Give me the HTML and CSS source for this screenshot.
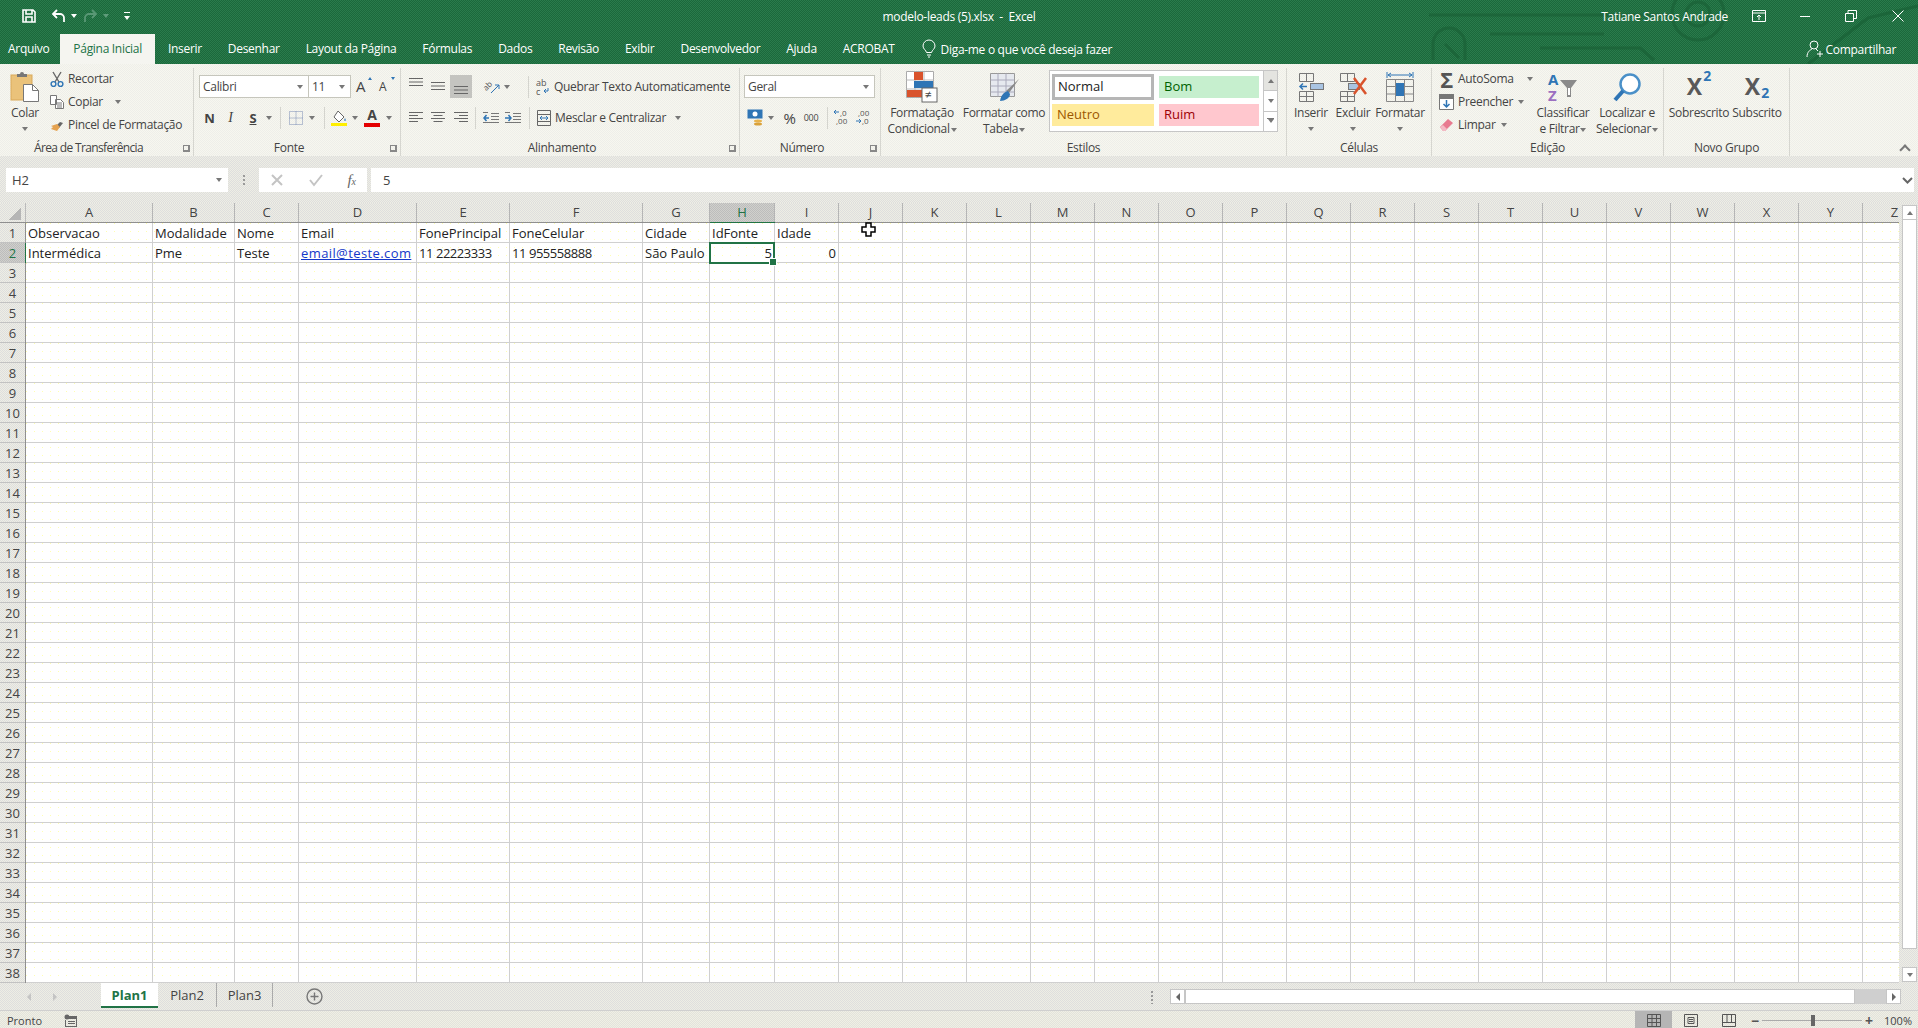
FILE: index.html
```html
<!DOCTYPE html>
<html lang="pt-BR">
<head>
    <meta charset="UTF-8">
    <title>modelo-leads (5).xlsx - Excel</title>
    <link rel="stylesheet" href="styles.css">
</head>
<body>
    <header class="app-head">
        <!-- circuit art behind the title bar -->
        <svg class="head-art" width="1918" height="64" viewBox="0 0 1918 64" fill="none" stroke="#1a6237" stroke-width="3">
            <path d="M1429 15H1672M1490 34H1604M1540 48H1640l14 12M1808 64l60-46 50-12"/>
            <path d="M1433 60V44a16 16 0 0 1 32 0v16M1445 44l14 14"/>
            <circle cx="1698" cy="14" r="26"/>
            <circle cx="1698" cy="14" r="12"/>
        </svg>
        <div class="title-row">
            <div class="qat">
                <svg class="qat-save" width="14" height="14" viewBox="0 0 14 14" fill="none" stroke="#fff" stroke-width="1.6"><path d="M1 1h10l2 2v10H1zM4 1v4h6V1M4 13V8h6v5"/></svg>
                <svg class="qat-undo" width="15" height="14" viewBox="0 0 15 14" fill="none" stroke="#fff" stroke-width="1.8"><path d="M6 1 2 5l4 4M2 5h7a4 4 0 0 1 4 4v4"/></svg>
                <i class="caret caret-white qat-caret"></i>
                <svg class="qat-redo" width="15" height="14" viewBox="0 0 15 14" fill="none" stroke="#5f9c7b" stroke-width="1.8"><path d="M9 1l4 4-4 4M13 5H6a4 4 0 0 0-4 4v4"/></svg>
                <i class="caret caret-dim qat-caret"></i>
                <span class="qat-more"><i class="caret caret-white"></i></span>
            </div>
            <div class="doc-title">modelo-leads (5).xlsx &nbsp;-&nbsp; Excel</div>
            <div class="win-area">
                <span class="user-name">Tatiane Santos Andrade</span>
                <svg class="win-ribbon" width="14" height="12" viewBox="0 0 14 12" fill="none" stroke="#fff"><path d="M.5.5h13v11H.5zM.5 3h13M7 10V5M5 7l2-2 2 2"/></svg>
                <svg class="win-min" width="10" height="10" viewBox="0 0 10 10" stroke="#fff"><path d="M0 5.5h10"/></svg>
                <svg class="win-max" width="12" height="12" viewBox="0 0 12 12" fill="none" stroke="#fff"><path d="M.5 3.5h8v8h-8zM3 3.5V.5h8.5v8H8.5"/></svg>
                <svg class="win-close" width="12" height="12" viewBox="0 0 12 12" stroke="#fff"><path d="M.5.5l11 11M11.5.5l-11 11"/></svg>
            </div>
        </div>
        <nav class="tab-row">
            <a class="tab tab-file">Arquivo</a>
            <a class="tab active">Página Inicial</a>
            <a class="tab">Inserir</a>
            <a class="tab">Desenhar</a>
            <a class="tab">Layout da Página</a>
            <a class="tab">Fórmulas</a>
            <a class="tab">Dados</a>
            <a class="tab">Revisão</a>
            <a class="tab">Exibir</a>
            <a class="tab">Desenvolvedor</a>
            <a class="tab">Ajuda</a>
            <a class="tab">ACROBAT</a>
            <a class="tell-me">
                <svg width="14" height="18" viewBox="0 0 14 18" fill="none" stroke="#fff"><path d="M4.5 12.5C4 10 1 9 1 6a6 6 0 0 1 12 0c0 3-3 4-3.5 6.5zM5 15h4M6 17h2"/></svg>
                Diga-me o que você deseja fazer
            </a>
            <a class="share">
                <svg width="17" height="18" viewBox="0 0 17 18" fill="none" stroke="#fff"><circle cx="8" cy="5" r="4"/><path d="M1 17c0-5 3-7 5-8M10 9l2 2M11 14h6M14 11v6"/></svg>
                Compartilhar
            </a>
        </nav>
    </header>

    <section class="ribbon">
        <!-- Clipboard -->
        <div class="group g-clip">
            <div class="group-body">
                <div class="big-btn w34">
                    <svg class="big-icon" width="30" height="32" viewBox="0 0 30 32">
                        <rect x="1" y="4" width="21" height="25" fill="#eac27a" stroke="#d9a95a"/>
                        <path d="M7 5V3h3a2 2 0 0 1 4 0h3v3H7z" fill="#777"/>
                        <path d="M13.5 13.5h9l6 6v11h-15z" fill="#fff" stroke="#777"/>
                        <path d="M22.5 13.5v6h6" fill="none" stroke="#777"/>
                    </svg>
                    <span>Colar</span>
                    <i class="caret big-caret"></i>
                </div>
                <div class="small-stack">
                    <div class="small-item">
                        <svg width="14" height="16" viewBox="0 0 14 16" fill="none"><path d="M3 1l6 10M11 1L5 11" stroke="#666" stroke-width="1.4"/><circle cx="3.5" cy="13" r="2.4" stroke="#2f75b5" stroke-width="1.4"/><circle cx="10.5" cy="13" r="2.4" stroke="#2f75b5" stroke-width="1.4"/></svg>
                        <span>Recortar</span>
                    </div>
                    <div class="small-item">
                        <svg width="14" height="14" viewBox="0 0 14 14" fill="#fff" stroke="#777"><path d="M.5.5h6v9h-6zM5.5 4.5h5l3 3v6h-8z"/><path d="M7 8h5M7 10h5M7 12h5" fill="none"/></svg>
                        <span>Copiar</span>
                        <i class="caret copy-caret"></i>
                    </div>
                    <div class="small-item">
                        <svg width="14" height="14" viewBox="0 0 14 14"><path d="M7 7l3-3 3 1-4 5z" fill="#666"/><path d="M7 6l3 3-3 4-6-2 1-1 1-1-2-1z" fill="#e5a24f"/></svg>
                        <span>Pincel de Formatação</span>
                    </div>
                </div>
            </div>
            <div class="group-label has-launcher clip-label">Área de Transferência<i class="launcher"></i></div>
        </div>

        <!-- Font -->
        <div class="group g-font">
            <div class="group-body stack-rows">
                <div class="tool-row">
                    <div class="combo w110">Calibri<i class="caret"></i></div>
                    <div class="combo w43">11<i class="caret"></i></div>
                    <span class="cell w6"></span>
                    <span class="font-step w12">A<i class="step-up"></i></span>
                    <span class="cell w11"></span>
                    <span class="font-step font-step-small w12">A<i class="step-down"></i></span>
                </div>
                <div class="tool-row row-two">
                    <span class="cell w21 fmt-b">N</span>
                    <span class="cell w21 fmt-i">I</span>
                    <span class="cell w24 fmt-u">S</span>
                    <span class="cell w8"><i class="caret"></i></span>
                    <span class="sep ml7"></span>
                    <span class="cell w16 ml7">
                        <svg width="14" height="14" viewBox="0 0 14 14" fill="none" stroke="#7a8db5" stroke-dasharray="1 1"><path d="M.5.5h13v13H.5zM7 .5v13M.5 7h13"/></svg>
                    </span>
                    <span class="cell w16"><i class="caret"></i></span>
                    <span class="sep ml4"></span>
                    <span class="cell w20 ml4">
                        <svg width="16" height="16" viewBox="0 0 16 16"><path d="M7 1l6 6-5 5-5-5z" fill="#fff" stroke="#666"/><path d="M14 8c1 2 1 3 0 3s-1-1 0-3z" fill="#2f75b5"/><rect y="13" width="16" height="3" fill="#ffef00"/></svg>
                    </span>
                    <span class="cell w12"><i class="caret"></i></span>
                    <span class="cell w22 color-a">A</span>
                    <span class="cell w12"><i class="caret"></i></span>
                </div>
            </div>
            <div class="group-label has-launcher">Fonte<i class="launcher"></i></div>
        </div>

        <!-- Alignment -->
        <div class="group g-align">
            <div class="group-body stack-rows">
                <div class="tool-row">
                    <span class="cell w21">
                        <svg class="lines-top" width="14" height="9" viewBox="0 0 14 9" stroke="#666"><path d="M0 .5h14M0 4h14M0 7.5h14"/></svg>
                    </span>
                    <span class="cell w24">
                        <svg width="14" height="9" viewBox="0 0 14 9" stroke="#666"><path d="M0 .5h14M0 4h14M0 7.5h14"/></svg>
                    </span>
                    <span class="cell w22 pressed">
                        <svg class="lines-low" width="14" height="9" viewBox="0 0 14 9" stroke="#666"><path d="M0 .5h14M0 4h14M0 7.5h14"/></svg>
                    </span>
                    <span class="cell w24 ml8">
                        <svg width="16" height="16" viewBox="0 0 16 16"><text class="svg-text" x="0" y="9" font-size="8" fill="#555" transform="rotate(-45 5 8)">ab</text><path d="M7 14l8-8M11 6h4v4" fill="none" stroke="#2f75b5"/></svg>
                    </span>
                    <span class="cell w6"><i class="caret"></i></span>
                    <span class="sep ml18"></span>
                    <span class="cell w14 ml7">
                        <svg width="14" height="20" viewBox="0 0 14 20"><text class="svg-text" x="0" y="9" font-size="9" fill="#555">ab</text><text class="svg-text" x="0" y="18" font-size="9" fill="#555">c</text><path d="M12 11v3H8M10 12l-2 2 2 2" fill="none" stroke="#2f75b5"/></svg>
                    </span>
                    <span class="row-text">Quebrar Texto Automaticamente</span>
                </div>
                <div class="tool-row row-two">
                    <span class="cell w21">
                        <svg width="14" height="11" viewBox="0 0 14 11" stroke="#666"><path d="M0 .5h14M0 3.5h9M0 6.5h14M0 9.5h9"/></svg>
                    </span>
                    <span class="cell w24">
                        <svg width="14" height="11" viewBox="0 0 14 11" stroke="#666"><path d="M0 .5h14M2.5 3.5h9M0 6.5h14M2.5 9.5h9"/></svg>
                    </span>
                    <span class="cell w21">
                        <svg width="14" height="11" viewBox="0 0 14 11" stroke="#666"><path d="M0 .5h14M5 3.5h9M0 6.5h14M5 9.5h9"/></svg>
                    </span>
                    <span class="sep ml4"></span>
                    <span class="cell w16 ml7">
                        <svg width="16" height="12" viewBox="0 0 16 12" fill="none" stroke="#777"><path d="M8 1.5h8M8 4.5h8M8 7.5h8M0 10.5h16M0 .5h5"/><path d="M6 6H1M3.5 3 1 6l2.5 3" stroke="#2f75b5" stroke-width="1.5"/></svg>
                    </span>
                    <span class="cell w16 ml6">
                        <svg width="16" height="12" viewBox="0 0 16 12" fill="none" stroke="#777"><path d="M8 1.5h8M8 4.5h8M8 7.5h8M0 10.5h16M0 .5h5"/><path d="M0 6h6M3.5 3 6 6 3.5 9" stroke="#2f75b5" stroke-width="1.5"/></svg>
                    </span>
                    <span class="sep ml8"></span>
                    <span class="cell w14 ml7">
                        <svg width="14" height="16" viewBox="0 0 14 16" fill="none" stroke="#666"><path d="M.5.5h13v15H.5zM.5 4.5h13M.5 11.5h13"/><path d="M3 8h8M3 8l2-2M3 8l2 2M11 8 9 6M11 8l-2 2" stroke="#2f75b5"/></svg>
                    </span>
                    <span class="row-text">Mesclar e Centralizar</span>
                    <i class="caret ml9"></i>
                </div>
            </div>
            <div class="group-label has-launcher">Alinhamento<i class="launcher"></i></div>
        </div>

        <!-- Number -->
        <div class="group g-number">
            <div class="group-body stack-rows">
                <div class="tool-row">
                    <div class="combo w131">Geral<i class="caret"></i></div>
                </div>
                <div class="tool-row row-two">
                    <span class="cell w23">
                        <svg width="17" height="17" viewBox="0 0 17 17"><rect x=".5" y=".5" width="15" height="9" fill="#2f75b5"/><circle cx="8" cy="5" r="2.5" fill="#fff"/><ellipse cx="11" cy="12" rx="4" ry="1.5" fill="#e8b34c"/><ellipse cx="11" cy="15" rx="4" ry="1.5" fill="#d9a13a"/></svg>
                    </span>
                    <span class="cell w8"><i class="caret"></i></span>
                    <span class="cell w13 ml8 num-pct">%</span>
                    <span class="cell w14 ml8 num-thou">000</span>
                    <span class="sep ml9"></span>
                    <span class="cell w14 ml6"><svg width="15" height="17" viewBox="0 0 15 17"><text class="svg-text" x="6" y="7" font-size="8" fill="#555">,0</text><text class="svg-text" x="2" y="15" font-size="8" fill="#555">,00</text><path d="M5 3H0M2 1 0 3l2 2" fill="none" stroke="#2f75b5"/></svg></span>
                    <span class="cell w14 ml8"><svg width="15" height="17" viewBox="0 0 15 17"><text class="svg-text" x="2" y="7" font-size="8" fill="#555">,00</text><text class="svg-text" x="6" y="15" font-size="8" fill="#555">,0</text><path d="M0 12h5M3 10l2 2-2 2" fill="none" stroke="#2f75b5"/></svg></span>
                </div>
            </div>
            <div class="group-label has-launcher">Número<i class="launcher"></i></div>
        </div>

        <!-- Styles -->
        <div class="group g-styles">
            <div class="group-body">
                <div class="big-btn w72">
                    <svg class="big-icon" width="32" height="32" viewBox="0 0 32 32">
                        <path d="M.5.5h27v26H.5z" fill="#fff" stroke="#aaa"/>
                        <path d="M.5 9h27M.5 18h27M9 .5v26M18 .5v26" stroke="#bbb" fill="none"/>
                        <rect x="8" y="1" width="9" height="8" fill="#d9532c"/>
                        <rect x="8" y="10" width="19" height="7" fill="#2f75b5"/>
                        <rect x="1" y="19" width="15" height="7" fill="#d9532c"/>
                        <rect x="16" y="17" width="15" height="14" fill="#fff" stroke="#666"/>
                        <text class="svg-text" x="19" y="28" font-size="12" fill="#444">≠</text>
                    </svg>
                    <span>Formatação</span>
                    <span>Condicional <i class="caret inline-caret"></i></span>
                </div>
                <div class="big-btn w82 ml5">
                    <svg class="big-icon" width="32" height="32" viewBox="0 0 32 32">
                        <path d="M2.5 2.5h24v23h-24z" fill="#e6e9ef" stroke="#999"/>
                        <path d="M2.5 9h24M2.5 15h24M2.5 21h24M10 2.5v23M18 2.5v23" stroke="#aab" fill="none"/>
                        <path d="M31 8 21 22l-3-2z" fill="#888"/>
                        <path d="M20 20c-4 1-7 4-8 10 5 0 10-3 10-7z" fill="#2f75b5"/>
                    </svg>
                    <span>Formatar como</span>
                    <span>Tabela <i class="caret inline-caret"></i></span>
                </div>
                <div class="gallery ml4">
                    <div class="style-chips">
                        <div class="chip chip-normal">Normal</div>
                        <div class="chip chip-good">Bom</div>
                        <div class="chip chip-neutral">Neutro</div>
                        <div class="chip chip-bad">Ruim</div>
                    </div>
                    <div class="gallery-arrows">
                        <span class="gallery-btn gallery-off"><i class="caret caret-up"></i></span>
                        <span class="gallery-btn"><i class="caret"></i></span>
                        <span class="gallery-btn gallery-more"><i class="caret"></i></span>
                    </div>
                </div>
            </div>
            <div class="group-label">Estilos</div>
        </div>

        <!-- Cells -->
        <div class="group g-cells">
            <div class="group-body">
                <div class="big-btn w36">
                    <svg class="big-icon" width="28" height="32" viewBox="0 0 28 32" fill="none" stroke="#777">
                        <path d="M2.5 2.5h14v8h-14zM9.5 2.5v8M2.5 20.5h14v10h-14zM9.5 20.5v10M2.5 25.5h14"/>
                        <rect x="13.5" y="12.5" width="13" height="6" fill="#a9c4e2"/>
                        <path d="M10 15.5H3M6 12.5l-3 3 3 3" stroke="#2f75b5" stroke-width="1.5"/>
                    </svg>
                    <span>Inserir</span>
                    <i class="caret big-caret"></i>
                </div>
                <div class="big-btn w36 ml6">
                    <svg class="big-icon" width="30" height="32" viewBox="0 0 30 32" fill="none" stroke="#777">
                        <path d="M2.5 2.5h14v8h-14zM9.5 2.5v8M2.5 20.5h14v10h-14zM9.5 20.5v10M2.5 25.5h14"/>
                        <rect x="10.5" y="12.5" width="11" height="6" fill="#a9c4e2"/>
                        <path d="M16 7l12 16M28 7 16 23" stroke="#d9532c" stroke-width="2.5"/>
                    </svg>
                    <span>Excluir</span>
                    <i class="caret big-caret"></i>
                </div>
                <div class="big-btn w52 ml3">
                    <svg class="big-icon" width="30" height="32" viewBox="0 0 30 32" fill="none" stroke="#888">
                        <path d="M2 1v6M28 1v6M3 4h24M3 4l3-2M3 4l3 2M27 4l-3-2M27 4l-3 2" stroke="#2f75b5"/>
                        <path d="M1.5 8.5h27v22h-27zM10.5 8.5v22M19.5 8.5v22M1.5 15.5h27M1.5 23h27"/>
                        <rect x="11" y="12" width="8" height="13" fill="#2f75b5" stroke="none"/>
                    </svg>
                    <span>Formatar</span>
                    <i class="caret big-caret"></i>
                </div>
            </div>
            <div class="group-label">Células</div>
        </div>

        <!-- Editing -->
        <div class="group g-edit">
            <div class="group-body">
                <div class="small-stack edit-stack">
                    <div class="small-item">
                        <span class="sigma">Σ</span>
                        <span>AutoSoma</span>
                        <i class="caret sum-caret"></i>
                    </div>
                    <div class="small-item">
                        <svg width="15" height="16" viewBox="0 0 15 16" fill="#fff" stroke="#777"><path d="M.5.5h14v15H.5z"/><path d="M.5.5h14v4H.5z" fill="#777"/><path d="M7.5 6v7M4.5 10l3 3 3-3" fill="none" stroke="#2f75b5" stroke-width="1.5"/></svg>
                        <span>Preencher</span>
                        <i class="caret fill-caret"></i>
                    </div>
                    <div class="small-item">
                        <svg width="15" height="14" viewBox="0 0 15 14"><path d="M1 9l8-8 5 4-8 8H4z" fill="#e87a90"/><path d="M1 9l3 4h2l2-2-4-4z" fill="#f4b9c4"/></svg>
                        <span>Limpar</span>
                        <i class="caret fill-caret"></i>
                    </div>
                </div>
                <div class="big-btn w54">
                    <svg class="big-icon" width="30" height="32" viewBox="0 0 30 32">
                        <text class="svg-bold" x="0" y="14" font-size="15" fill="#2f75b5">A</text>
                        <text class="svg-bold" x="0" y="30" font-size="15" fill="#9b6fc0">Z</text>
                        <path d="M12 9h17l-6 8v9h-4v-9z" fill="#8a8a8a"/>
                        <path d="M20 17v7h2v-7" fill="#fff"/>
                    </svg>
                    <span>Classificar</span>
                    <span>e Filtrar <i class="caret inline-caret"></i></span>
                </div>
                <div class="big-btn w62 ml6">
                    <svg class="big-icon" width="30" height="32" viewBox="0 0 30 32" fill="none">
                        <circle cx="18" cy="13" r="9.5" stroke="#4a90c8" stroke-width="2.5" fill="#fff"/>
                        <path d="M11 20 3 29" stroke="#2f75b5" stroke-width="4"/>
                    </svg>
                    <span>Localizar e</span>
                    <span>Selecionar <i class="caret inline-caret"></i></span>
                </div>
            </div>
            <div class="group-label">Edição</div>
        </div>

        <!-- Custom group -->
        <div class="group g-new">
            <div class="group-body">
                <div class="big-btn w60">
                    <div class="script-icon">X<sup>2</sup></div>
                    <span>Sobrescrito</span>
                </div>
                <div class="big-btn w48 ml4">
                    <div class="script-icon">X<sub>2</sub></div>
                    <span>Subscrito</span>
                </div>
            </div>
            <div class="group-label">Novo Grupo</div>
        </div>
        <i class="ribbon-collapse"></i>
    </section>

    <section class="formula-bar">
        <div class="name-box">H2<i class="caret"></i></div>
        <div class="grip"></div>
        <div class="fx-box">
            <svg width="14" height="14" viewBox="0 0 14 14" stroke="#c4c4c4" stroke-width="2"><path d="M2 2l10 10M12 2 2 12"/></svg>
            <svg width="14" height="14" viewBox="0 0 14 14" fill="none" stroke="#c4c4c4" stroke-width="2"><path d="M1 7l4 5 8-10"/></svg>
            <span class="fx-label">f<small>x</small></span>
        </div>
        <div class="formula-input">5
            <svg width="11" height="7" viewBox="0 0 11 7" fill="none" stroke="#666" stroke-width="2"><path d="M1 1l4.5 4.5L10 1"/></svg>
        </div>
    </section>

    <main class="sheet-wrap">
        <div class="sheet">
            <div class="col-heads">
                <div class="corner"></div>
                <div class="col-grid">
                    <div class="col-head">A</div><div class="col-head">B</div><div class="col-head">C</div><div class="col-head">D</div>
                    <div class="col-head">E</div><div class="col-head">F</div><div class="col-head">G</div><div class="col-head cur">H</div>
                    <div class="col-head">I</div><div class="col-head">J</div><div class="col-head">K</div><div class="col-head">L</div>
                    <div class="col-head">M</div><div class="col-head">N</div><div class="col-head">O</div><div class="col-head">P</div>
                    <div class="col-head">Q</div><div class="col-head">R</div><div class="col-head">S</div><div class="col-head">T</div>
                    <div class="col-head">U</div><div class="col-head">V</div><div class="col-head">W</div><div class="col-head">X</div>
                    <div class="col-head">Y</div><div class="col-head">Z</div>
                </div>
            </div>
            <div class="sheet-body">
                <div class="row-heads">
                    <div>1</div><div class="cur">2</div><div>3</div><div>4</div><div>5</div><div>6</div><div>7</div><div>8</div>
                    <div>9</div><div>10</div><div>11</div><div>12</div><div>13</div><div>14</div><div>15</div><div>16</div>
                    <div>17</div><div>18</div><div>19</div><div>20</div><div>21</div><div>22</div><div>23</div><div>24</div>
                    <div>25</div><div>26</div><div>27</div><div>28</div><div>29</div><div>30</div><div>31</div><div>32</div>
                    <div>33</div><div>34</div><div>35</div><div>36</div><div>37</div><div>38</div>
                </div>
                <div class="col-grid cells">
                    <div class="col"><div class="c">Observacao</div><div class="c">Intermédica</div></div>
                    <div class="col"><div class="c">Modalidade</div><div class="c">Pme</div></div>
                    <div class="col"><div class="c">Nome</div><div class="c">Teste</div></div>
                    <div class="col"><div class="c">Email</div><div class="c link">email@teste.com</div></div>
                    <div class="col"><div class="c">FonePrincipal</div><div class="c phone">11 22223333</div></div>
                    <div class="col"><div class="c">FoneCelular</div><div class="c phone">11 955558888</div></div>
                    <div class="col"><div class="c">Cidade</div><div class="c">São Paulo</div></div>
                    <div class="col"><div class="c">IdFonte</div><div class="c num selected">5</div></div>
                    <div class="col"><div class="c">Idade</div><div class="c num">0</div></div>
                    <div class="col"></div><div class="col"></div><div class="col"></div><div class="col"></div>
                    <div class="col"></div><div class="col"></div><div class="col"></div><div class="col"></div>
                    <div class="col"></div><div class="col"></div><div class="col"></div><div class="col"></div>
                    <div class="col"></div><div class="col"></div><div class="col"></div><div class="col"></div>
                    <div class="col"></div>
                </div>
            </div>
            <svg class="cell-cursor" width="15" height="15" viewBox="0 0 15 15"><path d="M5 1h5v4h4v5h-4v4H5v-4H1V5h4z" fill="#fff" stroke="#000" stroke-width="1.5"/></svg>
        </div>
        <div class="vscroll">
            <span class="sb-btn"><i class="caret caret-up"></i></span>
            <div class="sb-thumb"></div>
            <span class="sb-btn"><i class="caret"></i></span>
        </div>
    </main>

    <section class="tab-bar">
        <div class="sheet-nav"><i class="nav-left"></i><i class="nav-right"></i></div>
        <div class="sheet-tab on">Plan1</div>
        <div class="sheet-tab tab-two">Plan2</div>
        <div class="sheet-tab tab-three">Plan3</div>
        <div class="add-sheet">
            <svg width="17" height="17" viewBox="0 0 17 17" fill="none" stroke="#777" stroke-width="1.4"><circle cx="8.5" cy="8.5" r="7.5"/><path d="M8.5 4.5v8M4.5 8.5h8"/></svg>
        </div>
        <div class="hscroll">
            <span class="hs-dots"></span>
            <span class="sb-btn hs-btn"><i class="nav-left"></i></span>
            <div class="hs-thumb"></div>
            <div class="hs-gap"></div>
            <span class="sb-btn hs-btn"><i class="nav-right"></i></span>
        </div>
    </section>

    <footer class="status">
        <span class="ready">Pronto</span>
        <svg class="macro" width="13" height="13" viewBox="0 0 13 13" fill="#666"><circle cx="3" cy="3" r="2.5"/><path d="M5 2h8v11H1V6h1v6h10V5H5z"/><path d="M4 7h7v1H4zM4 9h7v1H4z"/></svg>
        <div class="status-right">
            <span class="view-btn view-on">
                <svg width="14" height="13" viewBox="0 0 14 13" fill="none" stroke="#555"><path d="M.5.5h13v12H.5zM.5 4.5h13M.5 8.5h13M5 .5v12M9.5.5v12"/></svg>
            </span>
            <span class="view-btn">
                <svg width="14" height="13" viewBox="0 0 14 13" fill="none" stroke="#555"><path d="M.5.5h13v12H.5zM4 3.5h6v6H4zM5 5.5h4M5 7.5h4"/></svg>
            </span>
            <span class="view-btn">
                <svg width="14" height="13" viewBox="0 0 14 13" fill="none" stroke="#555"><path d="M.5.5h13v12H.5zM.5 8.5h13M5 .5v8M9.5.5v8"/></svg>
            </span>
            <div class="zoom-bar">
                <b>−</b>
                <div class="zoom-track"><i></i></div>
                <b>+</b>
            </div>
            <span class="zoom-pct">100%</span>
        </div>
    </footer>
</body>
</html>
```
FILE: styles.css
```css
* {
    box-sizing: border-box;
}
html, body {
    height: 100%;
}
body {
    margin: 0;
    overflow: hidden;
    font-family: "Open Sans", "Noto Sans", sans-serif;
    font-size: 12px;
    letter-spacing: -0.3px;
    color: #444;
    background: #f1f1ea;
    display: flex;
    flex-direction: column;
}
svg {
    display: block;
    flex: none;
    overflow: visible;
}
i {
    font-style: normal;
}

/* small dropdown triangle used everywhere */
.caret {
    display: inline-block;
    width: 0;
    height: 0;
    border-left: 3.5px solid transparent;
    border-right: 3.5px solid transparent;
    border-top: 4px solid #777;
    flex: none;
}
.caret-up {
    border-top: 0;
    border-bottom: 4px solid #777;
}
.caret-white {
    border-top-color: #fff;
}
.caret-dim {
    border-top-color: #5f9c7b;
}
.inline-caret {
    vertical-align: middle;
    margin-left: -2px;
}

/* title bar + tabs */
.app-head {
    position: relative;
    height: 64px;
    flex: none;
    color: #fff;
    background: repeating-conic-gradient(#1b683b 0 25%, #2a7b4c 0 50%) 0 0/2px 2px;
}
.head-art {
    position: absolute;
    left: 0;
    top: 0;
    opacity: 0.75;
}
.title-row {
    position: relative;
    height: 32px;
    margin-bottom: 2px;
    display: grid;
    grid-template-columns: 1fr auto 1fr;
    align-items: center;
}
.qat {
    display: flex;
    align-items: center;
}
.qat-save {
    margin-left: 22px;
}
.qat-undo {
    margin-left: 15px;
}
.qat-caret {
    margin-left: 5px;
}
.qat-redo {
    margin-left: 6px;
    opacity: 0.9;
}
.qat-more {
    margin-left: 15px;
    padding-top: 3px;
    border-top: 1px solid #fff;
    display: flex;
    height: 8px;
}
.win-area {
    display: flex;
    align-items: center;
    justify-content: flex-end;
    padding-right: 14px;
}
.win-ribbon {
    margin-left: 24px;
}
.win-min {
    margin-left: 34px;
}
.win-max {
    margin-left: 35px;
}
.win-close {
    margin-left: 35px;
}
.tab-row {
    position: relative;
    height: 30px;
    display: flex;
    align-items: center;
}
.tab {
    height: 30px;
    line-height: 30px;
    padding: 0 13px;
}
.tab-file {
    padding: 0 11px 0 8px;
}
.tab.active {
    background: #f5f5f0;
    color: #217346;
}
.tell-me {
    display: flex;
    align-items: center;
    gap: 5px;
    margin-left: 14px;
}
.share {
    display: flex;
    align-items: center;
    gap: 3px;
    margin-left: auto;
    margin-right: 22px;
}

/* ribbon */
.ribbon {
    position: relative;
    flex: none;
    height: 92px;
    display: flex;
    background: repeating-conic-gradient(#f7f7ef 0 25%, #eeeee9 0 50%) 0 0/2px 2px;
}
.group {
    position: relative;
    height: 88px;
    margin-top: 4px;
    display: flex;
    flex-direction: column;
    border-right: 1px solid #d6d6d0;
}
.group-body {
    height: 72px;
    display: flex;
}
.group-label {
    position: relative;
    text-align: center;
    line-height: 16px;
}
.has-launcher {
    padding-right: 16px;
}
.clip-label {
    letter-spacing: -0.65px;
}
.launcher {
    position: absolute;
    right: 3px;
    top: 5px;
    width: 7px;
    height: 7px;
    border-left: 1px solid #888;
    border-top: 1px solid #888;
    border-bottom: 2px solid #888;
    border-right: 2px solid #888;
}
.g-clip { width: 194px; }
.g-font { width: 207px; }
.g-align { width: 339px; }
.g-number { width: 141px; }
.g-styles { width: 406px; }
.g-cells { width: 145px; }
.g-edit { width: 232px; }
.g-new { width: 126px; }
.g-clip .group-body { padding-left: 8px; }
.g-font .group-body { padding-left: 5px; }
.g-align .group-body { padding-left: 4px; }
.g-number .group-body { padding-left: 4px; }
.g-styles .group-body { padding-left: 5px; }
.g-cells .group-body { padding-left: 6px; }
.g-edit .group-body { padding-left: 7px; }
.g-new .group-body { padding-left: 5px; }
.big-btn {
    display: flex;
    flex-direction: column;
    align-items: center;
    line-height: 16px;
    white-space: nowrap;
    flex: none;
}
.big-icon {
    margin-top: 3px;
    height: 32px;
    margin-bottom: 2px;
}
.big-caret {
    margin-top: 6px;
}
.small-stack {
    margin-left: 8px;
    margin-top: -1px;
    display: flex;
    flex-direction: column;
    width: 130px;
}
.small-item {
    height: 23px;
    display: flex;
    align-items: center;
    gap: 4px;
    white-space: nowrap;
}
.copy-caret {
    margin-left: 8px;
}
.edit-stack {
    margin-left: 0;
    width: 97px;
}
.sum-caret {
    margin-left: 9px;
}
.fill-caret {
    margin-left: 1px;
}
.sigma {
    width: 15px;
    font-size: 22px;
    line-height: 20px;
    font-weight: 700;
    color: #555;
    text-align: center;
}
.stack-rows {
    flex-direction: column;
    padding-top: 7px;
}
.tool-row {
    height: 23px;
    display: flex;
    align-items: center;
    flex: none;
    white-space: nowrap;
}
.row-two {
    margin-top: 8px;
}
.cell {
    height: 23px;
    display: flex;
    align-items: center;
    justify-content: center;
    flex: none;
}
.sep {
    width: 1px;
    height: 22px;
    background: #d4d4ce;
    flex: none;
}
.row-text {
    margin-left: 4px;
}
.combo {
    height: 23px;
    flex: none;
    background: #fff;
    border: 1px solid #c6c6bc;
    display: flex;
    align-items: center;
    justify-content: space-between;
    padding: 0 5px 0 3px;
    margin-right: -1px;
}
.font-step {
    position: relative;
    font-size: 15px;
    width: 12px;
    line-height: 23px;
}
.font-step-small {
    font-size: 12px;
}
.step-up, .step-down {
    position: absolute;
    right: -4px;
    top: 2px;
    width: 0;
    height: 0;
    border-left: 2.5px solid transparent;
    border-right: 2.5px solid transparent;
}
.step-up {
    border-bottom: 3px solid #2f75b5;
}
.step-down {
    border-top: 3px solid #2f75b5;
}
.fmt-b {
    font-weight: 700;
    font-size: 13px;
}
.fmt-i {
    font-style: italic;
    font-family: "Liberation Serif", serif;
    font-size: 14px;
}
.fmt-u {
    font-weight: 700;
    text-decoration: underline;
    font-size: 13px;
}
.color-a {
    font-weight: 700;
    font-size: 14px;
    line-height: 12px;
    align-items: flex-start;
    padding-top: 3px;
    background: linear-gradient(#e40000, #e40000) center 17px/16px 4px no-repeat;
}
.pressed {
    background: #c4c4c0;
}
.lines-top {
    transform: translateY(-4px);
}
.lines-low {
    transform: translateY(4px);
}
.num-pct {
    font-size: 15px;
}
.num-thou {
    font-size: 9px;
}
.svg-text {
    font-family: "Open Sans", sans-serif;
    letter-spacing: 0;
}
.svg-bold {
    font-family: "Open Sans", sans-serif;
    font-weight: 700;
    letter-spacing: 0;
}
.gallery {
    width: 229px;
    height: 62px;
    margin-top: 2px;
    display: flex;
    flex: none;
}
.style-chips {
    width: 215px;
    background: #fff;
    border: 1px solid #c6c6c6;
    display: grid;
    grid-template-columns: 102px 100px;
    grid-template-rows: 26px 22px;
    column-gap: 5px;
    row-gap: 4px;
    padding: 3px 2px;
    font-size: 13px;
    letter-spacing: 0;
}
.chip {
    display: flex;
    align-items: center;
    padding: 0 0 2px 5px;
}
.chip-normal {
    background: #fff;
    color: #222;
    border: 3px solid #b6b6b6;
    padding-left: 3px;
}
.chip-good {
    background: #c6efce;
    color: #006100;
    margin: 2px 0;
}
.chip-neutral {
    background: #ffeb9c;
    color: #9c5700;
}
.chip-bad {
    background: #ffc7ce;
    color: #9c0006;
}
.gallery-arrows {
    width: 14px;
    display: flex;
    flex-direction: column;
    border: 1px solid #c6c6c6;
    border-left: 0;
}
.gallery-btn {
    flex: 1;
    display: flex;
    align-items: center;
    justify-content: center;
    background: #fff;
    border-bottom: 1px solid #c6c6c6;
}
.gallery-off {
    background: #e4e4e0;
}
.gallery-more {
    border-bottom: 0;
    background: linear-gradient(#777, #777) center 6px/7px 1px no-repeat #fff;
}
.script-icon {
    height: 37px;
    padding-top: 1px;
    font-size: 23px;
    line-height: 34px;
    font-weight: 700;
    letter-spacing: 0;
    color: #595959;
}
.script-icon sup, .script-icon sub {
    font-size: 14px;
    color: #2f75b5;
    line-height: 0;
    margin-left: 1px;
}
.script-icon sup {
    vertical-align: 14px;
}
.script-icon sub {
    vertical-align: -3px;
}
.ribbon-collapse {
    position: absolute;
    left: 1901px;
    top: 82px;
    width: 8px;
    height: 8px;
    border-left: 2px solid #777;
    border-top: 2px solid #777;
    transform: rotate(45deg);
}

/* formula bar */
.formula-bar {
    flex: none;
    height: 47px;
    padding: 12px 4px 11px 6px;
    display: flex;
    font-size: 13px;
    letter-spacing: 0;
    background: repeating-conic-gradient(#dedede 0 25%, #eeeee4 0 50%) 0 0/2px 2px;
}
.name-box {
    width: 222px;
    background: #fff;
    display: flex;
    align-items: center;
    justify-content: space-between;
    padding: 0 6px;
}
.grip {
    width: 4px;
    margin: 6px 14px;
    background: radial-gradient(circle, #999 1px, transparent 1px) 0 0/4px 4px;
}
.fx-box {
    width: 108px;
    background: #fff;
    display: flex;
    align-items: center;
    justify-content: space-between;
    padding: 0 11px;
    margin-left: -1px;
}
.fx-label {
    font-family: "Liberation Serif", serif;
    font-style: italic;
    font-size: 15px;
    color: #666;
}
.fx-label small {
    font-size: 10px;
}
.formula-input {
    flex: 1;
    margin-left: 4px;
    background: #fff;
    display: flex;
    align-items: center;
    justify-content: space-between;
    padding: 0 1px 0 12px;
}

/* sheet */
.sheet-wrap {
    flex: none;
    height: 780px;
    display: flex;
    letter-spacing: 0;
    background: repeating-conic-gradient(#dedede 0 25%, #eeeee4 0 50%) 0 0/2px 2px;
}
.sheet {
    position: relative;
    width: 1899px;
    overflow: hidden;
}
.col-heads {
    height: 20px;
    display: flex;
    border-bottom: 1px solid #8f8f8f;
}
.corner {
    width: 26px;
    flex: none;
    border-right: 1px solid #bbb;
    background: linear-gradient(135deg, transparent 55%, #b5b5b5 55%) 6px 4px/15px 13px no-repeat;
}
.col-grid {
    display: grid;
    grid-template-columns: 127px 82px 64px 118px 93px 133px 67px 65px 64px 64px repeat(16, 64px);
    flex: none;
}
.col-head {
    height: 19px;
    text-align: center;
    line-height: 19px;
    font-size: 13px;
    border-right: 1px solid #b5b5b5;
}
.col-head.cur {
    color: #217346;
    background: repeating-conic-gradient(#bcbcbc 0 25%, #d0d0cc 0 50%) 0 0/2px 2px;
    box-shadow: 0 1px 0 #217346;
}
.sheet-body {
    display: flex;
    height: 760px;
    border-bottom: 1px solid #8f8f8f;
}
.row-heads {
    width: 26px;
    flex: none;
    border-right: 1px solid #8f8f8f;
    font-size: 13px;
}
.row-heads div {
    height: 20px;
    line-height: 20px;
    text-align: center;
    border-bottom: 1px solid #c2c2c2;
}
.row-heads .cur {
    color: #217346;
    background: repeating-conic-gradient(#bcbcbc 0 25%, #d0d0cc 0 50%) 0 0/2px 2px;
    box-shadow: 1px 0 0 #217346;
}
.cells {
    height: 760px;
    background:
        repeating-linear-gradient(transparent 0 19px, #d0d0d0 19px 20px),
        radial-gradient(circle at 0 0, #ffffb0 1px, transparent 1px) 0 0/8px 8px,
        #fff;
}
.col {
    border-right: 1px solid #d0d0d0;
}
.c {
    position: relative;
    height: 20px;
    line-height: 20px;
    padding: 0 2px;
    font-size: 13px;
    color: #222;
    white-space: nowrap;
}
.num {
    text-align: right;
}
.phone {
    letter-spacing: -0.45px;
}
.link {
    color: #1538c9;
    text-decoration: underline;
    letter-spacing: 0.4px;
}
.selected {
    outline: 2px solid #217346;
    outline-offset: -1px;
}
.selected::after {
    content: "";
    position: absolute;
    right: -3px;
    bottom: -3px;
    width: 6px;
    height: 6px;
    background: #217346;
    border: 1px solid #fff;
}
.cell-cursor {
    position: absolute;
    left: 861px;
    top: 19px;
}
.vscroll {
    width: 19px;
    padding: 2px 1px 1px 3px;
    display: flex;
    flex-direction: column;
}
.sb-btn {
    height: 15px;
    flex: none;
    display: flex;
    align-items: center;
    justify-content: center;
    background: #fff;
    border: 1px solid #c6c6c6;
}
.sb-thumb {
    height: 730px;
    margin-bottom: 18px;
    background: #fff;
    border: 1px solid #c6c6c6;
    border-top: 0;
}

/* sheet tabs */
.tab-bar {
    flex: none;
    height: 27px;
    display: flex;
    letter-spacing: 0;
    font-size: 13px;
    background: repeating-conic-gradient(#dedede 0 25%, #eeeee4 0 50%) 0 0/2px 2px;
}
.sheet-nav {
    width: 101px;
    display: flex;
    align-items: center;
    gap: 22px;
    padding-left: 27px;
}
.nav-left, .nav-right {
    width: 0;
    height: 0;
    border-top: 4px solid transparent;
    border-bottom: 4px solid transparent;
    flex: none;
}
.nav-left {
    border-right: 4px solid #c4c4c4;
}
.nav-right {
    border-left: 4px solid #c4c4c4;
}
.sheet-tab {
    height: 24px;
    line-height: 24px;
    border-right: 1px solid #aaa;
    white-space: nowrap;
    display: flex;
    justify-content: center;
}
.sheet-tab.on {
    width: 57px;
    color: #217346;
    font-weight: 700;
    background: #fff;
    border-right: 0;
    border-bottom: 2px solid #217346;
    height: 25px;
}
.tab-two {
    width: 59px;
}
.tab-three {
    width: 56px;
}
.add-sheet {
    margin-left: 33px;
    padding-top: 5px;
}
.hscroll {
    margin-left: auto;
    margin-right: 17px;
    display: flex;
    align-items: center;
    height: 27px;
}
.hs-dots {
    width: 4px;
    height: 14px;
    margin-right: 16px;
    background: radial-gradient(circle, #999 1px, transparent 1px) 0 0/4px 4px;
}
.hs-btn {
    width: 15px;
}
.hs-btn .nav-left, .hs-btn .nav-right {
    border-left-color: #666;
    border-right-color: #666;
}
.hs-thumb {
    width: 670px;
    height: 15px;
    background: #fff;
    border: 1px solid #c6c6c6;
}
.hs-gap {
    width: 31px;
    height: 15px;
    background: #cfcfcf;
}

/* status bar */
.status {
    flex: 1;
    display: flex;
    align-items: center;
    padding-left: 7px;
    letter-spacing: 0;
    font-size: 11px;
    background: repeating-conic-gradient(#f0f0e4 0 25%, #e2e2dc 0 50%) 0 0/2px 2px;
    border-top: 1px solid #cfcfcf;
}
.macro {
    margin-left: 22px;
}
.status-right {
    margin-left: auto;
    height: 100%;
    display: flex;
    align-items: center;
    padding-right: 6px;
}
.view-btn {
    width: 38px;
    height: 100%;
    display: flex;
    align-items: center;
    justify-content: center;
}
.view-on {
    width: 37px;
    background: #b5b5b5;
}
.zoom-bar {
    display: flex;
    align-items: center;
    margin-left: 3px;
    gap: 3px;
    font-size: 14px;
    color: #555;
}
.zoom-track {
    position: relative;
    width: 100px;
    height: 1px;
    background: #aaa;
}
.zoom-track i {
    position: absolute;
    left: 49px;
    top: -5px;
    width: 4px;
    height: 11px;
    background: #666;
}
.zoom-pct {
    margin-left: 11px;
}

/* width and margin helpers for ribbon cells */
.w6 { width: 6px; }
.w8 { width: 8px; }
.w11 { width: 11px; }
.w12 { width: 12px; }
.w13 { width: 13px; }
.w14 { width: 14px; }
.w16 { width: 16px; }
.w20 { width: 20px; }
.w21 { width: 21px; }
.w22 { width: 22px; }
.w23 { width: 23px; }
.w24 { width: 24px; }
.w34 { width: 34px; }
.w36 { width: 36px; }
.w43 { width: 43px; }
.w48 { width: 48px; }
.w52 { width: 52px; }
.w54 { width: 54px; }
.w60 { width: 60px; }
.w62 { width: 62px; }
.w72 { width: 72px; }
.w82 { width: 82px; }
.w110 { width: 110px; }
.w131 { width: 131px; }
.ml3 { margin-left: 3px; }
.ml4 { margin-left: 4px; }
.ml5 { margin-left: 5px; }
.ml6 { margin-left: 6px; }
.ml7 { margin-left: 7px; }
.ml8 { margin-left: 8px; }
.ml9 { margin-left: 9px; }
.ml18 { margin-left: 18px; }
```
